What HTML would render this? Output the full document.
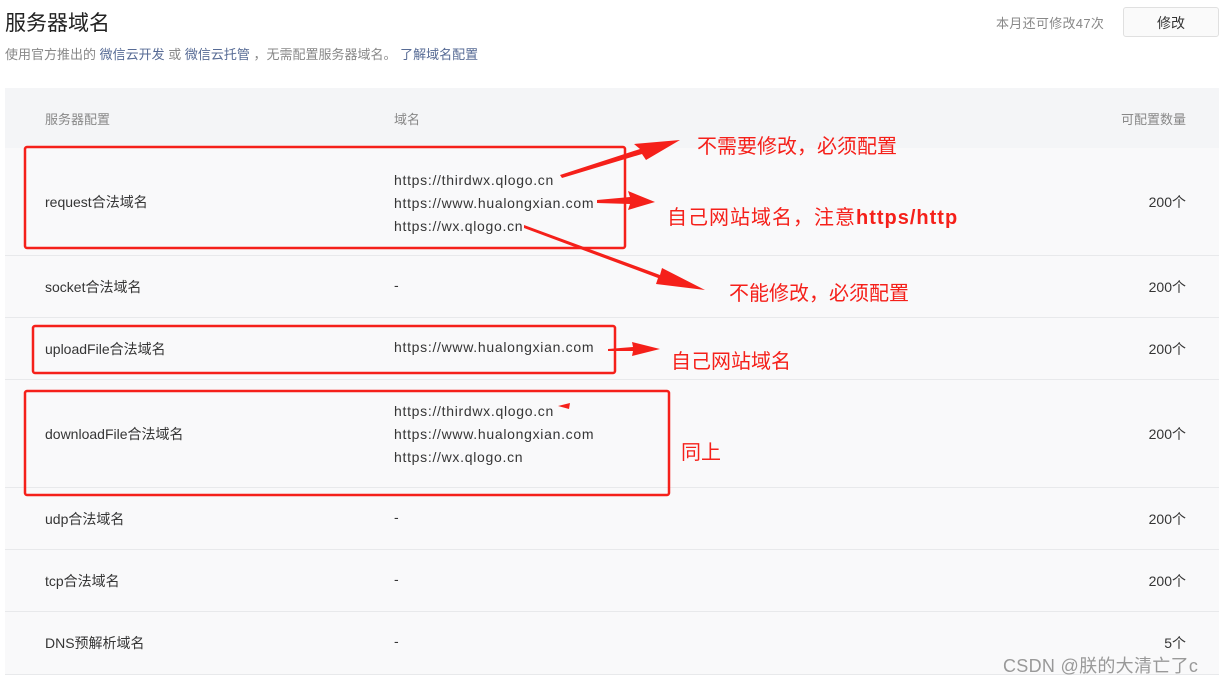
<!DOCTYPE html>
<html><head><meta charset="utf-8"><style>
body{margin:0;width:1219px;height:683px;background:#fff;font-family:"Liberation Sans","Noto Sans CJK SC",sans-serif;position:relative;overflow:hidden}
.a{position:absolute;white-space:nowrap}
.t{font-size:14px;color:#353535}
.u{letter-spacing:0.7px}
.row{position:absolute;left:5px;width:1214px;background:#f9f9fa;border-bottom:1px solid #e8e9eb}
.r{font-size:14px;color:#353535;right:33px}
</style></head><body>
<div class="a" style="left:5px;top:7px;font-size:21px;color:#222">服务器域名</div>
<div class="a" style="left:5px;top:44px;font-size:13px;color:#888">使用官方推出的 <span style="color:#576b95">微信云开发</span> 或 <span style="color:#576b95">微信云托管</span> ，无需配置服务器域名。 <span style="color:#576b95">了解域名配置</span></div>
<div class="a" style="left:996px;top:13px;font-size:13px;color:#888;letter-spacing:0.3px">本月还可修改47次</div>
<div class="a" style="left:1123px;top:7px;width:96px;height:30px;border:1px solid #e0e0e0;border-radius:3px;background:#fafafa;box-sizing:border-box;text-align:center;line-height:30px;font-size:14px;color:#353535">修改</div>
<div class="row" style="top:88px;height:60px;background:#f4f5f7;border:none"></div>
<div class="a" style="left:45px;top:109px;font-size:13px;color:#888">服务器配置</div>
<div class="a" style="left:394px;top:109px;font-size:13px;color:#888">域名</div>
<div class="a" style="right:33px;top:109px;font-size:13px;color:#888">可配置数量</div>
<div class="row" style="top:148px;height:107px"></div>
<div class="row" style="top:256px;height:61px"></div>
<div class="row" style="top:318px;height:61px"></div>
<div class="row" style="top:380px;height:107px"></div>
<div class="row" style="top:488px;height:61px"></div>
<div class="row" style="top:550px;height:61px"></div>
<div class="row" style="top:612px;height:62px"></div>
<div class="a t" style="left:45px;top:192px">request合法域名</div>
<div class="a t u" style="left:394px;top:169px;line-height:23px">https://thirdwx.qlogo.cn<br>https://www.hualongxian.com<br>https://wx.qlogo.cn</div>
<div class="a r" style="top:192px">200个</div>
<div class="a t" style="left:45px;top:277px">socket合法域名</div><div class="a t" style="left:394px;top:277px">-</div><div class="a r" style="top:277px">200个</div>
<div class="a t" style="left:45px;top:339px">uploadFile合法域名</div><div class="a t u" style="left:394px;top:339px">https://www.hualongxian.com</div><div class="a r" style="top:339px">200个</div>
<div class="a t" style="left:45px;top:424px">downloadFile合法域名</div>
<div class="a t u" style="left:394px;top:400px;line-height:23px">https://thirdwx.qlogo.cn<br>https://www.hualongxian.com<br>https://wx.qlogo.cn</div>
<div class="a r" style="top:424px">200个</div>
<div class="a t" style="left:45px;top:509px">udp合法域名</div><div class="a t" style="left:394px;top:509px">-</div><div class="a r" style="top:509px">200个</div>
<div class="a t" style="left:45px;top:571px">tcp合法域名</div><div class="a t" style="left:394px;top:571px">-</div><div class="a r" style="top:571px">200个</div>
<div class="a t" style="left:45px;top:633px">DNS预解析域名</div><div class="a t" style="left:394px;top:633px">-</div><div class="a r" style="top:633px">5个</div>
<div class="a" style="left:1003px;top:652px;font-size:18px;color:#999;letter-spacing:0.3px">CSDN @朕的大清亡了c</div>
<svg class="a" style="left:0;top:0" width="1219" height="683">
<g fill="none" stroke="#f5201a" stroke-width="2.5">
<rect x="25" y="147" width="600" height="101" rx="2"/>
<rect x="33" y="326" width="582" height="47" rx="2"/>
<rect x="25" y="391" width="644" height="104" rx="2"/>
</g>
<g fill="#f5201a">
<polygon points="560,175 640,149 634,144 680,140 646,160 642,154 562,178"/>
<polygon points="597,200 630,197 628,191 655,202 628,210 630,204 597,203"/>
<polygon points="524,225 660,275 662,268 705,290 656,284 658,278 524,228"/>
<polygon points="608,349 633,347 632,342 660,349 632,356 633,351 608,351"/>
<polygon points="558,406 570,403 569,409"/>
</g>
<g fill="#f5201a" font-size="20" font-family="Liberation Sans,Noto Sans CJK SC,sans-serif">
<text x="697" y="153">不需要修改，必须配置</text>
<text x="667" y="224" letter-spacing="1">自己网站域名，注意<tspan font-weight="bold">https/http</tspan></text>
<text x="729" y="300">不能修改，必须配置</text>
<text x="671" y="368">自己网站域名</text>
<text x="681" y="459">同上</text>
</g>
</svg>
</body></html>
